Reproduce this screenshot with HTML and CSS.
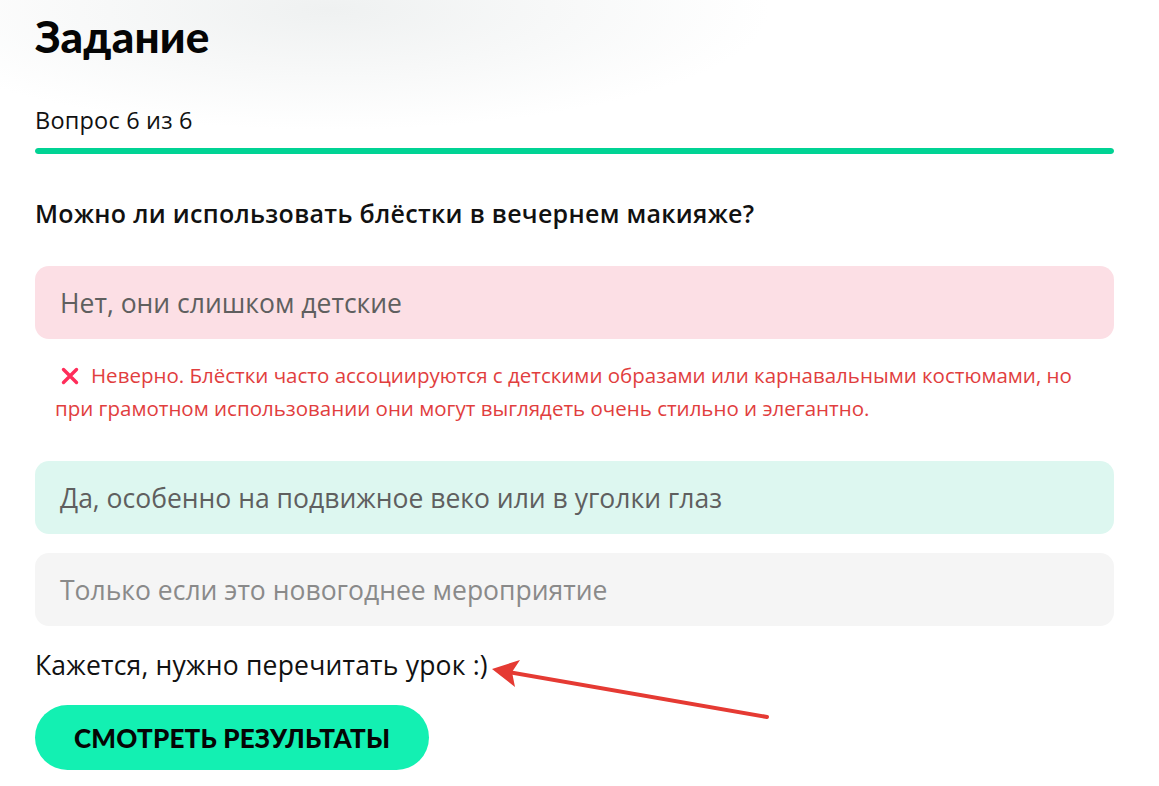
FILE: index.html
```html
<!DOCTYPE html>
<html lang="ru">
<head>
<meta charset="utf-8">
<title>Задание</title>
<link rel="stylesheet" href="styles.css">
</head>
<body>
<main class="task">
  <h1 class="task-title">Задание</h1>
  <div class="progress">
    <div class="progress-label">Вопрос 6 из 6</div>
    <div class="progress-track"><div class="progress-fill" style="width:100%"></div></div>
  </div>
  <h2 class="question">Можно ли использовать блёстки в вечернем макияже?</h2>
  <ul class="answers">
    <li class="answer answer--wrong">Нет, они слишком детские</li>
    <li class="feedback">
      <svg class="feedback-icon" viewBox="0 0 20 20" width="20" height="20" aria-hidden="true">
        <path d="M3.5 3.5 L16.5 16.5 M16.5 3.5 L3.5 16.5" stroke="#ff2d5a" stroke-width="3.4" stroke-linecap="round"/>
      </svg>Неверно. Блёстки часто ассоциируются с детскими образами или карнавальными костюмами, но при грамотном использовании они могут выглядеть очень стильно и элегантно.
    </li>
    <li class="answer answer--right">Да, особенно на подвижное веко или в уголки глаз</li>
    <li class="answer answer--muted">Только если это новогоднее мероприятие</li>
  </ul>
  <p class="verdict">Кажется, нужно перечитать урок :)</p>
  <button class="results-btn" type="button">СМОТРЕТЬ РЕЗУЛЬТАТЫ</button>
  <svg class="pointer-arrow" viewBox="0 0 290 72" width="290" height="72" aria-hidden="true">
    <line x1="279" y1="65" x2="20" y2="20" stroke="#e53a33" stroke-width="4" stroke-linecap="round"/>
    <polygon points="4,17 32,8 24,20 27,35" fill="#e53a33"/>
  </svg>
</main>
</body>
</html>
```
FILE: styles.css
```css
* { box-sizing: border-box; }

html, body {
  margin: 0;
  padding: 0;
  background: #fff;
}

body {
  font-family: "Open Sans", "Noto Sans", sans-serif;
  color: #111;
  min-height: 786px;
  background:
    radial-gradient(ellipse 440px 120px at 330px 10px, rgba(232, 235, 235, 0.7), rgba(255, 255, 255, 0) 100%),
    #fff;
}

.task {
  position: relative;
  width: 1114px;
  padding: 10px 0 0 35px;
}

.task-title {
  margin: 0;
  font-family: "Lato", sans-serif;
  font-size: 44px;
  line-height: 52px;
  font-weight: 900;
  letter-spacing: 0.2px;
  color: #050505;
}

.progress {
  margin-top: 44px;
}

.progress-label {
  font-size: 23.5px;
  line-height: 28px;
  letter-spacing: 0.2px;
  color: #111;
}

.progress-track {
  margin-top: 14px;
  height: 6px;
  border-radius: 3px;
  background: #e6e6e6;
  overflow: hidden;
}

.progress-fill {
  height: 100%;
  background: #00d394;
  border-radius: 3px;
}

.question {
  margin: 44px 0 0;
  font-size: 25px;
  line-height: 30px;
  font-weight: 600;
  letter-spacing: 0.3px;
  color: #111;
}

.answers {
  list-style: none;
  margin: 38px 0 0;
  padding: 0;
}

.answer {
  height: 73px;
  display: flex;
  align-items: center;
  padding: 0 25px;
  border-radius: 14px;
  font-size: 26.5px;
  color: #5f5f5f;
}

.answer--wrong { background: #fcdfe5; }

.answer--right { background: #ddf7f0; }

.answer--muted {
  background: #f5f5f5;
  color: #8a8a8a;
  margin-top: 19px;
}

.feedback {
  padding: 20px 24px 36px 20px;
  font-size: 20.5px;
  line-height: 33px;
  color: #e13e3e;
}

.feedback-icon {
  vertical-align: -3px;
  margin: 0 11px 0 5px;
}

.verdict {
  margin: 24px 0 0;
  font-size: 26.5px;
  line-height: 30px;
  letter-spacing: 0.2px;
  color: #111;
}

.results-btn {
  margin-top: 25px;
  height: 65px;
  padding: 0 39px;
  border: 0;
  border-radius: 33px;
  background: #13f0b2;
  font-family: "Lato", sans-serif;
  font-size: 26px;
  font-weight: 900;
  letter-spacing: 0.2px;
  color: #050505;
  cursor: pointer;
}

/* annotation arrow pointing at the verdict line */
.pointer-arrow {
  position: absolute;
  left: 488px;
  top: 652px;
}
```
